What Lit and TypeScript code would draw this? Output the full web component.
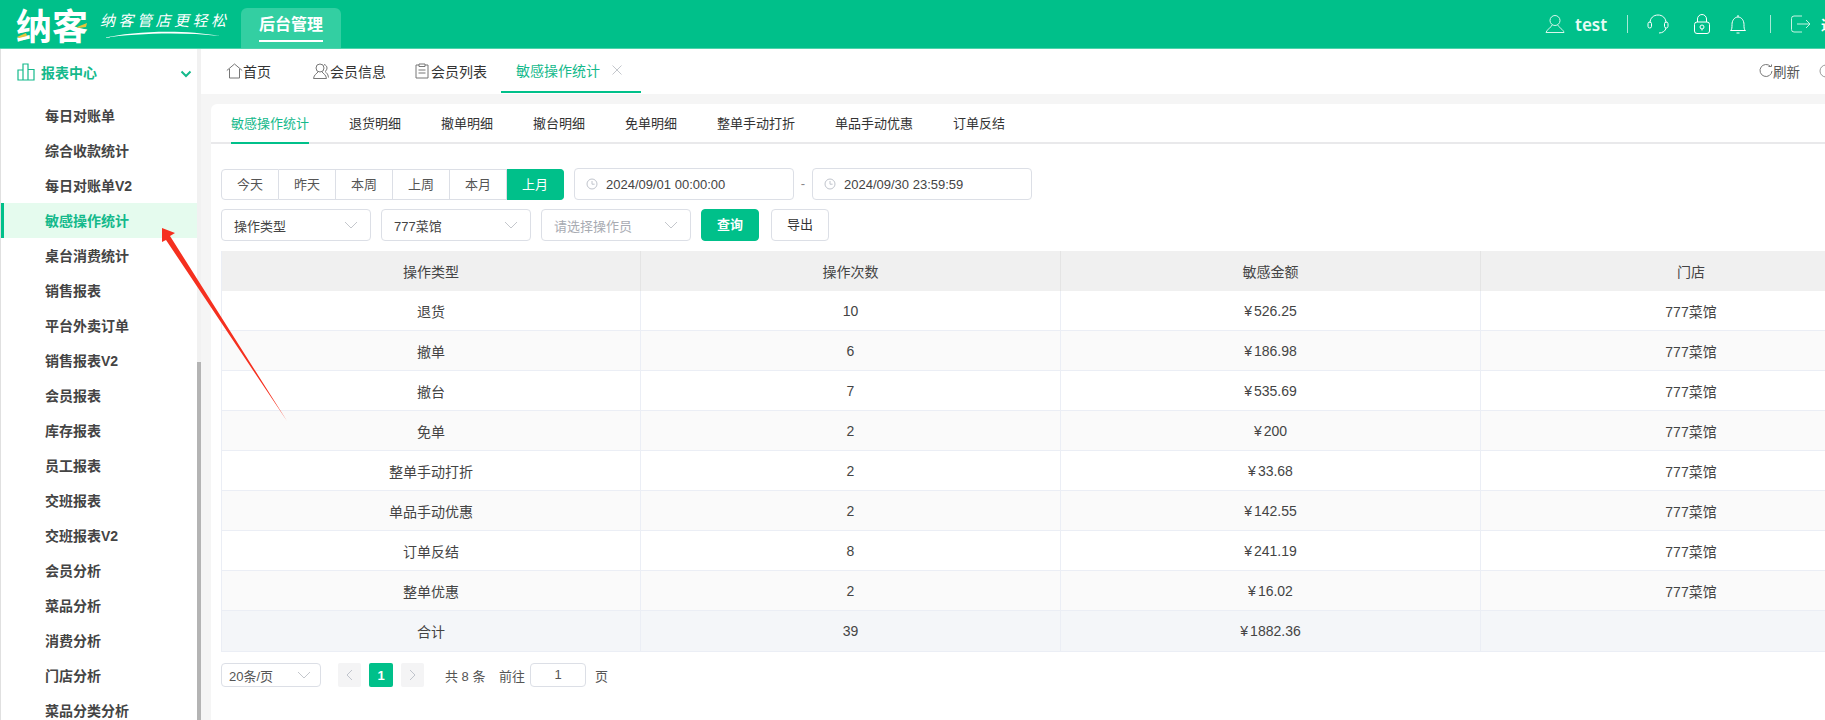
import { LitElement, html, css, svg } from "lit";
import { customElement } from "lit/decorators.js";

const menu = ["每日对账单","综合收款统计","每日对账单V2","敏感操作统计","桌台消费统计","销售报表","平台外卖订单","销售报表V2","会员报表","库存报表","员工报表","交班报表","交班报表V2","会员分析","菜品分析","消费分析","门店分析","菜品分类分析"];
const subs = ["敏感操作统计","退货明细","撤单明细","撤台明细","免单明细","整单手动打折","单品手动优惠","订单反结"];
const quick = ["今天","昨天","本周","上周","本月","上月"];
const rows = [["退货","10","526.25"],["撤单","6","186.98"],["撤台","7","535.69"],["免单","2","200"],["整单手动打折","2","33.68"],["单品手动优惠","2","142.55"],["订单反结","8","241.19"],["整单优惠","2","16.02"]];

const chev = svg`<svg class="chev" width="14" height="8" viewBox="0 0 14 8"><path d="M1 1l6 6 6-6" fill="none" stroke="#c4c7cc" stroke-width="1"/></svg>`;
const clock = svg`<svg width="12" height="12" viewBox="0 0 12 12"><circle cx="6" cy="6" r="5" fill="none" stroke="#c0c4cc"/><path d="M6 3v3.2h2.6" fill="none" stroke="#c0c4cc"/></svg>`;

@customElement("app-root")
export class AppRoot extends LitElement {
  static styles = css`
    :host { display: block; width: 1825px; height: 720px; overflow: hidden; position: relative; background: #fff; font-family: "Liberation Sans", "Noto Sans CJK SC", sans-serif; font-size: 14px; color: #333; }
    * { box-sizing: border-box; }
    header { height: 49px; background: #00c08a; border-bottom: 1px solid #4fd3ac; display: flex; align-items: flex-start; color: #fff; }
    .logo { width: 100px; height: 48px; padding-left: 16px; display: flex; align-items: center; font-size: 36px; line-height: 48px; font-weight: 700; position: relative; font-family: "Noto Sans CJK SC", sans-serif; flex: none; white-space: nowrap; }
    .logo svg { position: absolute; left: 0; top: 0; }
    .slogan { width: 141px; height: 48px; position: relative; font-size: 15px; letter-spacing: 3.500px; padding-top: 10px; line-height: 20px; font-style: italic; font-family: "Noto Sans CJK SC", sans-serif; font-weight: 400; white-space: nowrap; flex: none; }
    .slogan svg { position: absolute; left: 3px; top: 30px; }
    .mod { margin-top: 8px; width: 100px; height: 40px; background: #33cfa2; border-radius: 6px 6px 0 0; display: flex; justify-content: center; font-weight: 700; font-size: 16px; flex: none; }
    .mod span { height: 34px; line-height: 33px; border-bottom: 2px solid #fff; }
    .hright { margin-left: auto; height: 48px; display: flex; align-items: center; width: 325px; padding-left: 45px; flex: none; overflow: hidden; }
    .hright > * { flex: none; }
    .hright .name { font-size: 17px; font-weight: 600; margin-left: 10px; width: 32px; font-family: "Noto Sans", sans-serif; color: #e8fbf5; }
    .sep { width: 1px; height: 18px; background: rgba(255,255,255,.65); }
    .hright svg { display: block; }
    .hright .out { margin-left: 10px; font-size: 14px; font-weight: 700; white-space: nowrap; }
    .s1 { margin-left: 20px; }
    .i1 { margin-left: 19px; }
    .i2 { margin-left: 25px; }
    .i3 { margin-left: 20px; }
    .s2 { margin-left: 24px; }
    .i4 { margin-left: 20px; }
    .body { display: flex; height: 671px; }
    aside { width: 201px; height: 671px; flex: none; position: relative; background: #fff; border-left: 1px solid #e0e0e0; overflow: hidden; }
    .group { height: 49px; display: flex; align-items: flex-start; padding: 14px 0 0 16px; color: #14b98b; font-weight: 700; position: relative; }
    .group .t { margin-left: 6px; line-height: 20px; }
    .group .arr { position: absolute; left: 179px; top: 21px; }
    .group::before { content: ""; position: absolute; left: -1px; top: 13px; height: 50px; width: 1px; background: #00c08a; }
    .item { height: 35px; width: 196px; padding: 1px 0 0 44px; line-height: 35px; font-weight: 700; color: #444; white-space: nowrap; }
    .item.on { background: #e5fbee; color: #14b98b; border-left: 3px solid #00c08a; padding-left: 41px; }
    .sb { position: absolute; right: 0; top: 0; bottom: 0; width: 4px; background: #f1f1f1; }
    .sb i { position: absolute; left: 0; top: 313px; bottom: 0; width: 4px; background: #b4b4b4; display: block; }
    main { flex: 1; min-width: 0; background: #f5f5f5; }
    .tabs { height: 45px; background: #fff; display: flex; align-items: flex-start; padding-left: 25px; position: relative; color: #333; }
    .tab { height: 44px; display: flex; align-items: center; white-space: nowrap; }
    .tab svg { display: block; }
    .tab.on { color: #14b98b; border-bottom: 2px solid #00c08a; width: 140px; padding-left: 15px; }
    .tab.on svg { margin-left: 12px; }
    .t1 { width: 87px; }
    .t2 { width: 102px; }
    .t2 span { margin-left: 1px; }
    .t3 { width: 86px; }
    .t3 span { margin-left: 2px; }
    .refresh { position: absolute; left: 1558px; top: 0; height: 44px; display: flex; align-items: center; color: #555; font-size: 13.500px; white-space: nowrap; }
    .refresh .more { margin-left: 19px; }
    .card { margin: 10px 0 0 10px; background: #fff; height: 616px; border-radius: 6px 0 0 0; }
    .subs { height: 40px; display: flex; gap: 40px; padding-left: 20px; border-bottom: 2px solid #e9e9eb; font-size: 13px; color: #333; white-space: nowrap; }
    .subs div { height: 40px; line-height: 40px; width: 52px; flex: none; }
    .subs div.w { width: 78px; }
    .subs div.on { color: #14b98b; border-bottom: 2px solid #00c08a; }
    .filters { padding: 24px 0 0 10px; }
    .line { display: flex; align-items: flex-start; height: 41px; font-size: 13px; }
    .quick { display: flex; height: 31px; margin-top: 1px; }
    .quick div { width: 57px; border: 1px solid #dcdfe6; border-left: 0; text-align: center; line-height: 29px; color: #555; }
    .quick div:first-child { width: 58px; border-left: 1px solid #dcdfe6; border-radius: 4px 0 0 4px; }
    .quick div.on { background: #00c08a; border-color: #00c08a; color: #fff; border-radius: 0 4px 4px 0; }
    .date { width: 220px; height: 32px; border: 1px solid #dcdfe6; border-radius: 4px; display: flex; align-items: center; padding-left: 11px; gap: 8px; color: #444; font-size: 13px; }
    .date.first { margin-left: 10px; }
    .date svg { display: block; }
    .dash { width: 18px; text-align: center; line-height: 32px; color: #888; }
    .sel { width: 150px; height: 32px; border: 1px solid #dcdfe6; border-radius: 4px; padding: 0 12px; display: flex; align-items: center; justify-content: space-between; color: #444; font-size: 13px; margin-right: 10px; white-space: nowrap; }
    .sel.ph { color: #a8abb2; }
    .btn { width: 58px; height: 32px; border-radius: 4px; text-align: center; line-height: 30px; border: 1px solid #dcdfe6; color: #333; margin-right: 12px; }
    .btn.p { background: #00c08a; border-color: #00c08a; color: #fff; font-weight: 700; }
    .tbl { margin: 1px 0 0 10px; display: grid; grid-template-columns: 420px 420px 420px 421px; width: 1700px; }
    .tbl > div { height: 40px; display: flex; align-items: center; justify-content: center; font-size: 14px; color: #444; border-right: 1px solid #ebeef5; border-bottom: 1px solid #ebeef5; }
    .tbl > div.c0 { border-left: 1px solid #ebeef5; }
    .tbl > div.h { background: #f0f0f0; height: 40px; color: #444; border-bottom: 0; border-right-color: #e4e4e4; }
    .tbl > div.alt { background: #fafafa; }
    .tbl > div.sum { background: #f4f6f9; height: 41px; }
    .yen { margin-right: 2px; }
    .pager { margin: 11px 0 0 10px; display: flex; align-items: center; height: 24px; font-size: 13px; color: #555; }
    .psel { width: 100px; height: 24px; border: 1px solid #dcdfe6; border-radius: 4px; display: flex; align-items: center; justify-content: space-between; padding: 0 9px 0 7px; color: #555; }
    .pb { width: 23px; height: 24px; background: #f4f4f5; border-radius: 2px; display: flex; align-items: center; justify-content: center; margin-left: 8px; }
    .pb.first { margin-left: 17px; }
    .pb.cur { background: #00c08a; color: #fff; font-weight: 700; width: 24px; }
    .total { margin-left: 21px; width: 54px; white-space: nowrap; }
    .goto { white-space: nowrap; }
    .pinp { margin: 0 9px 0 5px; width: 56px; height: 24px; border: 1px solid #dcdfe6; border-radius: 4px; text-align: center; line-height: 21px; }
    .arrow { position: absolute; left: 0; top: 0; pointer-events: none; }
  `;

  render() {
    return html`
      <header>
        <div class="logo"><span>纳客</span>
          <svg width="100" height="48" viewBox="0 0 100 48"><path d="M17 37l9-4 1 3-8 2zM77 27l10-4-1 4-8 1z" fill="#e8c23a"/></svg>
        </div>
        <div class="slogan">纳客管店更轻松
          <svg width="118" height="10" viewBox="0 0 118 10"><path d="M0 8C30 1 80-1 117 6C80 2 35 3 0 8Z" fill="#fff"/></svg>
        </div>
        <div class="mod"><span>后台管理</span></div>
        <div class="hright">
          <svg width="20" height="20" viewBox="0 0 20 20" fill="none" stroke="#d8f7ec" stroke-width="1"><circle cx="10" cy="6.500" r="5"/><path d="M7 11c0 2-5.500 4.500-6 7.500h18c-.5-3-6-5.500-6-7.500"/></svg>
          <span class="name">test</span>
          <span class="sep s1"></span>
          <svg class="i1" width="22" height="20" viewBox="0 0 22 20" fill="none" stroke="#fff" stroke-width="1"><path d="M3 9C3 4 6.500 1 11 1s8 3 8 8"/><rect x="1" y="8" width="3.500" height="6" rx="1.700"/><rect x="17.500" y="8" width="3.500" height="6" rx="1.700"/><path d="M19 14c-.5 3-3.500 5-7 5"/></svg>
          <svg class="i2" width="16" height="20" viewBox="0 0 16 20" fill="none" stroke="#fff" stroke-width="1"><rect x=".5" y="8" width="15" height="11.500" rx="2.500"/><path d="M3.500 8V5a4.500 4.500 0 0 1 9 0v3"/><circle cx="8" cy="13" r="2"/><path d="M8 15v1.500"/></svg>
          <svg class="i3" width="16" height="20" viewBox="0 0 16 20" fill="none" stroke="#fff" stroke-width="1"><path d="M.5 16.500c1.500-1 1.500-3 1.500-6 0-4 2.500-7.500 6-7.500s6 3.500 6 7.500c0 3 0 5 1.500 6z"/><path d="M6.500 19h3M8 1v2"/></svg>
          <span class="sep s2"></span>
          <svg class="i4" width="20" height="18" viewBox="0 0 20 18" fill="none" stroke="#c6f3e3" stroke-width="1"><path d="M11 1H3a2.500 2.500 0 0 0-2.500 2.500v11A2.500 2.500 0 0 0 3 17h8"/><path d="M6 9h13M15 5l4 4-4 4"/></svg>
          <span class="out">退出</span>
        </div>
      </header>
      <div class="body">
        <aside>
          <div class="group">
            <svg width="18" height="18" viewBox="0 0 18 18" fill="none" stroke="#14b98b" stroke-width="1.200"><path d="M1 7h5v10H1zM6 1h5v16H6zM11 6.500h6V17h-6z"/></svg>
            <span class="t">报表中心</span>
            <svg class="arr" width="12" height="8" viewBox="0 0 12 8"><path d="M1.500 1.500L6 6l4.500-4.500" fill="none" stroke="#14b98b" stroke-width="2"/></svg>
          </div>
          ${menu.map((m, i) => html`<div class="item ${i === 3 ? "on" : ""}">${m}</div>`)}
          <div class="sb"><i></i></div>
        </aside>
        <main>
          <div class="tabs">
            <div class="tab t1">
              <svg width="17" height="16" viewBox="0 0 17 16" fill="none" stroke="#777"><path d="M.8 7.500L8.500 1l7.700 6.500M3.500 6v9h10V6"/></svg><span>首页</span>
            </div>
            <div class="tab t2">
              <svg width="16" height="16" viewBox="0 0 16 16" fill="none" stroke="#777"><circle cx="7" cy="5" r="4"/><path d="M5 9c-1 1.500-4 2.500-4.500 6.500h13c-.5-4-3.500-5-4.500-6.500M11 1.500c2 .5 3 2 3 3.500s-1 3-2 3.500c1 1 3 2 3.500 6"/></svg><span>会员信息</span>
            </div>
            <div class="tab t3">
              <svg width="14" height="16" viewBox="0 0 14 16" fill="none" stroke="#777"><path d="M4 2H1v13h12V2h-3M4 1h6v2.500H4zM3.500 7h7M3.500 10h7"/></svg><span>会员列表</span>
            </div>
            <div class="tab on">
              <span>敏感操作统计</span>
              <svg width="10" height="10" viewBox="0 0 10 10"><path d="M.5.500l9 9M9.500.500l-9 9" stroke="#c4c7cc" fill="none"/></svg>
            </div>
            <div class="refresh">
              <svg width="14" height="14" viewBox="0 0 14 14" fill="none" stroke="#777"><path d="M11.500 2.500A6 6 0 1 0 13 7M9.500 2.500h3v-2"/></svg><span>刷新</span>
              <svg class="more" width="14" height="14" viewBox="0 0 14 14" fill="none" stroke="#999"><circle cx="7" cy="7" r="6"/></svg>
            </div>
          </div>
          <div class="card">
            <div class="subs">
              ${subs.map((s, i) => html`<div class="${i === 0 ? "on" : ""} ${s.length === 6 ? "w" : ""}">${s}</div>`)}
            </div>
            <div class="filters">
              <div class="line">
                <div class="quick">${quick.map((q, i) => html`<div class="${i === 5 ? "on" : ""}">${q}</div>`)}</div>
                <div class="date first">${clock}<span>2024/09/01 00:00:00</span></div>
                <div class="dash">-</div>
                <div class="date">${clock}<span>2024/09/30 23:59:59</span></div>
              </div>
              <div class="line">
                <div class="sel"><span>操作类型</span>${chev}</div>
                <div class="sel"><span>777菜馆</span>${chev}</div>
                <div class="sel ph"><span>请选择操作员</span>${chev}</div>
                <div class="btn p">查询</div>
                <div class="btn">导出</div>
              </div>
            </div>
            <div class="tbl">
              <div class="h c0">操作类型</div><div class="h">操作次数</div><div class="h">敏感金额</div><div class="h">门店</div>
              ${rows.map((r, i) => html`
                <div class="c0 ${i % 2 ? "alt" : ""}">${r[0]}</div>
                <div class="${i % 2 ? "alt" : ""}">${r[1]}</div>
                <div class="${i % 2 ? "alt" : ""}"><span class="yen">¥</span>${r[2]}</div>
                <div class="${i % 2 ? "alt" : ""}">777菜馆</div>`)}
              <div class="sum c0">合计</div><div class="sum">39</div><div class="sum"><span class="yen">¥</span>1882.36</div><div class="sum"></div>
            </div>
            <div class="pager">
              <div class="psel"><span>20条/页</span>${chev}</div>
              <div class="pb first"><svg width="7" height="12" viewBox="0 0 7 12"><path d="M6 1L1 6l5 5" fill="none" stroke="#c0c4cc"/></svg></div>
              <div class="pb cur">1</div>
              <div class="pb"><svg width="7" height="12" viewBox="0 0 7 12"><path d="M1 1l5 5-5 5" fill="none" stroke="#c0c4cc"/></svg></div>
              <div class="total">共 8 条</div>
              <div class="goto">前往</div>
              <div class="pinp">1</div>
              <div>页</div>
            </div>
          </div>
        </main>
      </div>
      <svg class="arrow" width="320" height="440" viewBox="0 0 320 440"><path d="M162 228L175 233L170 236L287 421L166 240L162 242Z" fill="#f5301f"/></svg>
    `;
  }
}
